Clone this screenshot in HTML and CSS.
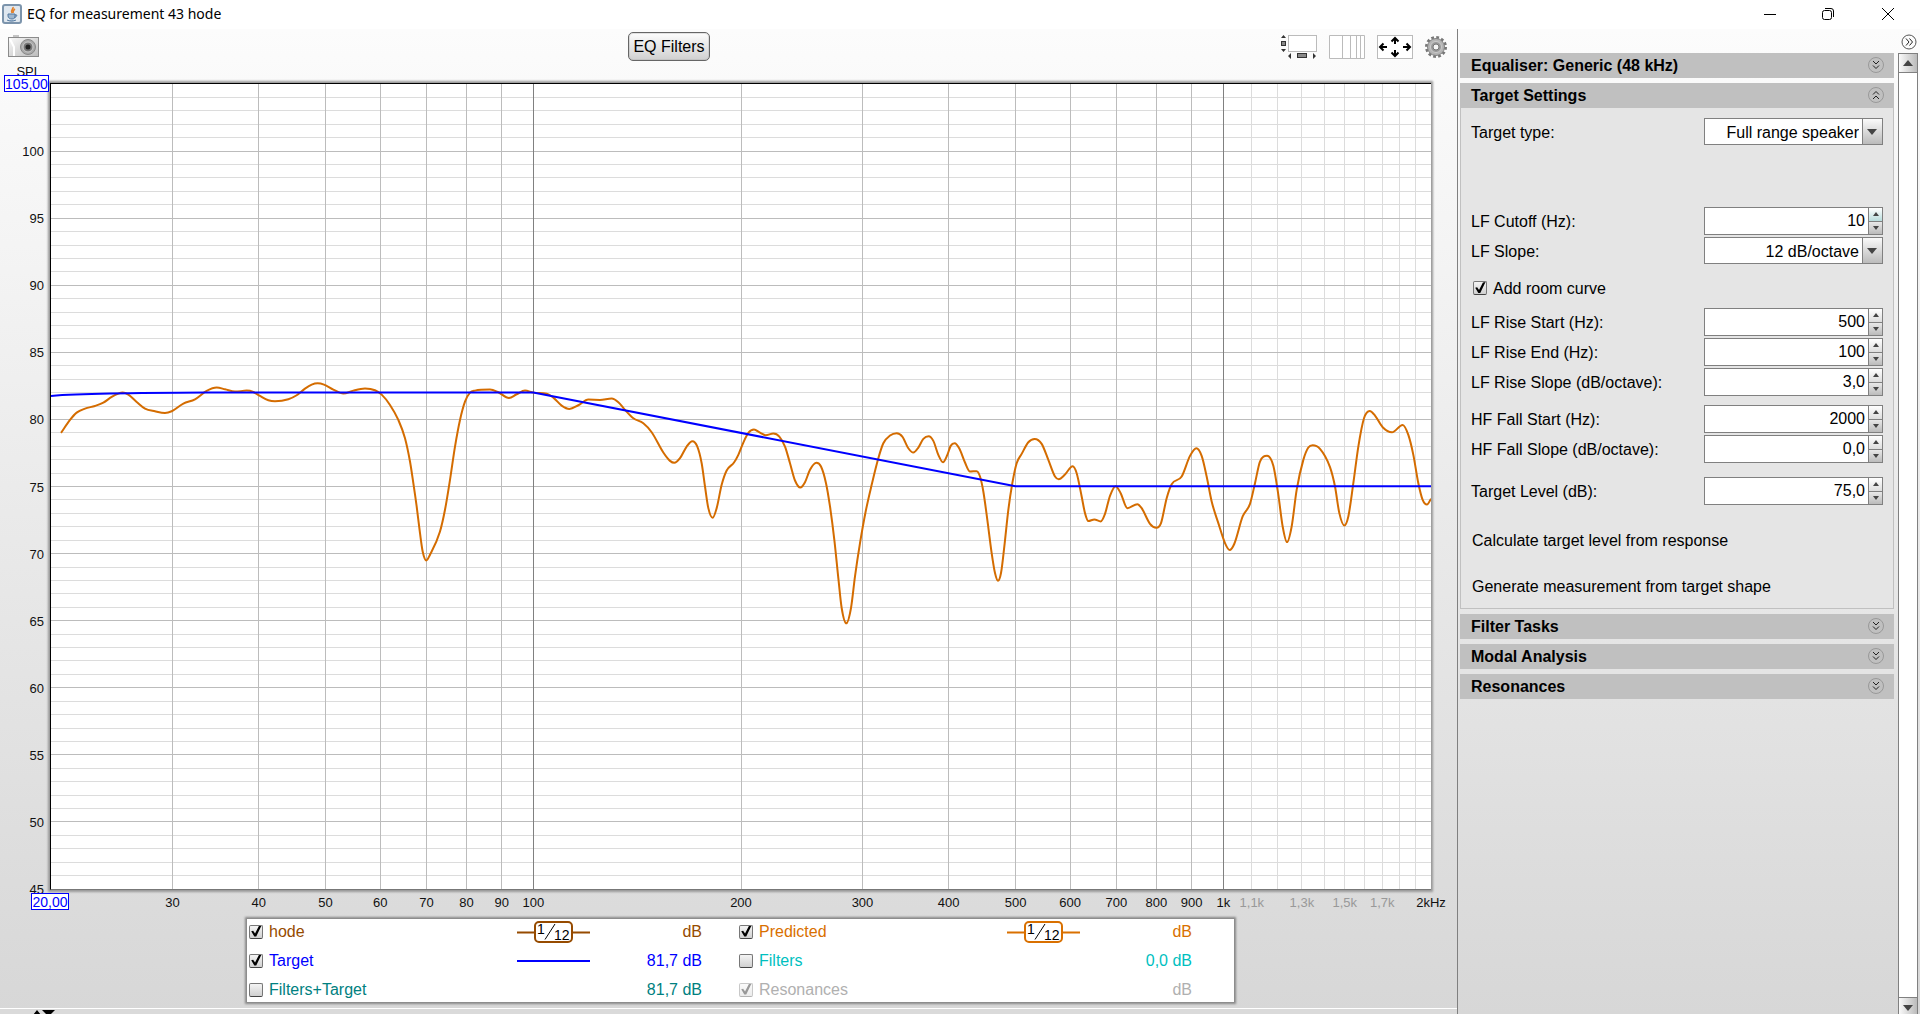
FILE: index.html
```html
<!DOCTYPE html>
<html lang="en">
<head>
<meta charset="utf-8">
<title>EQ for measurement 43 hode</title>
<link rel="stylesheet" href="styles.css">
</head>
<body>
<header class="titlebar">
  <svg class="app-icon" width="20" height="20" viewBox="0 0 20 20">
    <rect x="1" y="1" width="18" height="18" rx="2" fill="#dfe7ef" stroke="#7c94ac" stroke-width="2"/>
    <path d="M11 3c1 2-3 3-1 6M13 5c-2 1-2 2-2 4" fill="none" stroke="#e2812b" stroke-width="1.6"/>
    <path d="M6 10h7v2c0 2-1 3-3 3s-4-1-4-3zM13 11c3-1 2 2-1 3M5 16c3 1.500 6 1.500 9 0" fill="#9db6cf" stroke="#54799f"/>
  </svg>
  <h1 class="title">EQ for measurement 43 hode</h1>
  <div class="window-controls">
    <button type="button" aria-label="Minimize"><svg width="14" height="14" viewBox="0 0 14 14"><path d="M1 7.500h12"/></svg></button>
    <button type="button" aria-label="Restore"><svg width="14" height="14" viewBox="0 0 14 14"><rect x="1.500" y="3.500" width="9" height="9" rx="2"/><path d="M4 1.500h6q2.500 0 2.500 2.500v6"/></svg></button>
    <button type="button" aria-label="Close"><svg width="14" height="14" viewBox="0 0 14 14"><path d="M1 1l12 12M13 1L1 13"/></svg></button>
  </div>
</header>

<div class="workspace">
  <main class="graph">
    <div class="toolbar">
      <button type="button" class="icon-button" aria-label="Capture graph image">
        <svg width="31" height="22" viewBox="0 0 31 22">
          <defs><linearGradient id="cam" x1="0" y1="0" x2="1" y2="1"><stop offset="0" stop-color="#fafafa"/><stop offset="1" stop-color="#bbb"/></linearGradient></defs>
          <rect x="5" y="0" width="6" height="3" fill="#c4c4c4"/>
          <rect x=".5" y="2.500" width="30" height="19" fill="url(#cam)" stroke="#8b8b8b"/>
          <path d="M2 4l4 8v9" fill="none" stroke="#fff" stroke-width="2"/>
          <circle cx="20" cy="12" r="7.500" fill="#aaa" stroke="#888"/>
          <circle cx="20" cy="12" r="5" fill="#777" stroke="#ccc"/>
          <circle cx="20" cy="12" r="2.500" fill="#222"/>
        </svg>
      </button>
      <button type="button" class="eq-button">EQ Filters</button>
      <div class="tools">
        <button type="button" class="icon-button" aria-label="Scrollbars">
          <svg width="36" height="24" viewBox="0 0 36 24">
            <rect x="7.500" y=".5" width="28" height="16" fill="#fff" stroke="#bbb"/>
            <path d="M0 3l2.500-3L5 3zM0 14h5l-2.500 3zM10 18v6l-3-3zM32 18v6l3-3z" fill="#333"/>
            <rect x=".5" y="6.500" width="4" height="4" fill="#888" stroke="#333"/>
            <rect x="16.500" y="18.500" width="9" height="4" fill="#888" stroke="#333"/>
          </svg>
        </button>
        <button type="button" class="icon-button" aria-label="Frequency axis">
          <svg width="36" height="24" viewBox="0 0 36 24"><path d="M.5.5h35v23H.5zM13.500 0v24M21.500 0v24M27.500 0v24M31.500 0v24" fill="#fff" stroke="#bbb"/></svg>
        </button>
        <button type="button" class="icon-button" aria-label="Graph limits">
          <svg width="36" height="24" viewBox="0 0 36 24">
            <rect x=".5" y=".5" width="35" height="23" fill="#fff" stroke="#bbb"/>
            <path d="M18 9V3M14.500 6.500L18 3l3.500 3.500M18 15v6M14.500 17.500L18 21l3.500-3.500M10 12H3M6.500 8.500L3 12l3.500 3.500M26 12h7M29.500 8.500L33 12l-3.500 3.500" fill="none" stroke="#000" stroke-width="2"/>
          </svg>
        </button>
        <button type="button" class="icon-button" aria-label="Graph settings">
          <svg width="22" height="24" viewBox="0 0 22 24">
            <circle cx="11" cy="12" r="9.500" fill="none" stroke="#777" stroke-width="3" stroke-dasharray="2.730 2.240"/>
            <circle cx="11" cy="12" r="8.500" fill="#b5b5b5" stroke="#828282"/>
            <circle cx="11" cy="12" r="5.500" fill="#999" stroke="#ccc"/>
            <circle cx="11" cy="12" r="3" fill="#f5f5f5" stroke="#777"/>
          </svg>
        </button>
      </div>
    </div>

    <div class="plot">
      <svg class="plot-svg" id="plot" width="100%" height="100%" role="img" aria-label="SPL against frequency">
        <g id="grid"></g>
        <svg class="traces" width="100%" height="100%" viewBox="0 0 4140 2418" preserveAspectRatio="none">
          <path id="predicted" class="trace predicted" d=""/>
          <path class="trace target" d="M0 937Q120 928 467 927H1447L2893 1208H4140"/>
        </svg>
        <g id="labels"></g>
      </svg>
      <input class="limit limit-top" aria-label="Maximum SPL" value="105,00">
      <input class="limit limit-left" aria-label="Minimum frequency" value="20,00">
    </div>

    <section class="legend" aria-label="Traces">
      <div class="trace-row hode">
        <input type="checkbox" id="t-hode" checked><label for="t-hode">hode</label>
        <svg width="73" height="24" viewBox="0 0 73 24"><path class="key" d="M0 12.500h73"/><rect class="key" x="18" y="2" width="37" height="20" rx="4"/><path class="slash" d="M28 19.500L38 4"/><text x="20" y="14">1</text><text x="37" y="20">12</text></svg>
        <output>dB</output>
      </div>
      <div class="trace-row pred">
        <input type="checkbox" id="t-pred" checked><label for="t-pred">Predicted</label>
        <svg width="73" height="24" viewBox="0 0 73 24"><path class="key" d="M0 12.500h73"/><rect class="key" x="18" y="2" width="37" height="20" rx="4"/><path class="slash" d="M28 19.500L38 4"/><text x="20" y="14">1</text><text x="37" y="20">12</text></svg>
        <output>dB</output>
      </div>
      <div class="trace-row targ">
        <input type="checkbox" id="t-targ" checked><label for="t-targ">Target</label>
        <svg width="73" height="24" viewBox="0 0 73 24"><path class="key" d="M0 12h73"/></svg>
        <output>81,7 dB</output>
      </div>
      <div class="trace-row filt">
        <input type="checkbox" id="t-filt"><label for="t-filt">Filters</label>
        <span></span>
        <output>0,0 dB</output>
      </div>
      <div class="trace-row both">
        <input type="checkbox" id="t-both"><label for="t-both">Filters+Target</label>
        <span></span>
        <output>81,7 dB</output>
      </div>
      <div class="trace-row reso">
        <input type="checkbox" id="t-reso" checked disabled><label for="t-reso">Resonances</label>
        <span></span>
        <output>dB</output>
      </div>
    </section>

    <div class="splitter">
      <svg width="22" height="5" viewBox="0 0 22 5"><path d="M0 5l4-5 4 5zM9 0h13l-5 5h-3z" fill="#000"/></svg>
    </div>
  </main>

  <aside class="side">
    <div class="side-top">
      <button type="button" class="round" aria-label="Hide panel"><svg width="16" height="16" viewBox="0 0 16 16"><circle cx="8" cy="8" r="7"/><path d="M5 4.500L8 8l-3 3.500M8.500 4.500l3 3.500-3 3.500"/></svg></button>
    </div>
    <div class="side-body">
      <div class="sections">
        <button type="button" class="section-head">Equaliser: Generic (48 kHz)<svg width="16" height="16" viewBox="0 0 16 16"><circle cx="8" cy="8" r="7.500"/><path d="M5 4l3 3 3-3M5 8.500l3 3 3-3"/></svg></button>
        <section class="section">
          <button type="button" class="section-head">Target Settings<svg width="16" height="16" viewBox="0 0 16 16"><circle cx="8" cy="8" r="7.500"/><path d="M5 7.500l3-3 3 3M5 12l3-3 3 3"/></svg></button>
          <form class="settings">
            <div class="row type-row"><label for="type">Target type:</label><div class="combo"><select id="type"><option>Full range speaker</option></select></div></div>
            <div class="row"><label for="cutoff">LF Cutoff (Hz):</label><div class="spinner"><input id="cutoff" value="10"><div class="steps"><button type="button" class="up hot" aria-label="Increase"></button><button type="button" class="down" aria-label="Decrease"></button></div></div></div>
            <div class="row"><label for="slope">LF Slope:</label><div class="combo"><select id="slope"><option>12 dB/octave</option></select></div></div>
            <div class="check-row"><input type="checkbox" id="room" checked><label for="room">Add room curve</label></div>
            <div class="row"><label for="rise-start">LF Rise Start (Hz):</label><div class="spinner"><input id="rise-start" value="500"><div class="steps"><button type="button" class="up" aria-label="Increase"></button><button type="button" class="down" aria-label="Decrease"></button></div></div></div>
            <div class="row"><label for="rise-end">LF Rise End (Hz):</label><div class="spinner"><input id="rise-end" value="100"><div class="steps"><button type="button" class="up" aria-label="Increase"></button><button type="button" class="down" aria-label="Decrease"></button></div></div></div>
            <div class="row"><label for="rise-slope">LF Rise Slope (dB/octave):</label><div class="spinner"><input id="rise-slope" value="3,0"><div class="steps"><button type="button" class="up" aria-label="Increase"></button><button type="button" class="down" aria-label="Decrease"></button></div></div></div>
            <div class="row fall-row"><label for="fall-start">HF Fall Start (Hz):</label><div class="spinner"><input id="fall-start" value="2000"><div class="steps"><button type="button" class="up" aria-label="Increase"></button><button type="button" class="down" aria-label="Decrease"></button></div></div></div>
            <div class="row"><label for="fall-slope">HF Fall Slope (dB/octave):</label><div class="spinner"><input id="fall-slope" value="0,0"><div class="steps"><button type="button" class="up" aria-label="Increase"></button><button type="button" class="down" aria-label="Decrease"></button></div></div></div>
            <div class="row level-row"><label for="level">Target Level (dB):</label><div class="spinner"><input id="level" value="75,0"><div class="steps"><button type="button" class="up" aria-label="Increase"></button><button type="button" class="down" aria-label="Decrease"></button></div></div></div>
            <button type="button" class="action">Calculate target level from response</button>
            <button type="button" class="action">Generate measurement from target shape</button>
          </form>
        </section>
        <button type="button" class="section-head">Filter Tasks<svg width="16" height="16" viewBox="0 0 16 16"><circle cx="8" cy="8" r="7.500"/><path d="M5 4l3 3 3-3M5 8.500l3 3 3-3"/></svg></button>
        <button type="button" class="section-head">Modal Analysis<svg width="16" height="16" viewBox="0 0 16 16"><circle cx="8" cy="8" r="7.500"/><path d="M5 4l3 3 3-3M5 8.500l3 3 3-3"/></svg></button>
        <button type="button" class="section-head">Resonances<svg width="16" height="16" viewBox="0 0 16 16"><circle cx="8" cy="8" r="7.500"/><path d="M5 4l3 3 3-3M5 8.500l3 3 3-3"/></svg></button>
      </div>
      <div class="scrollbar">
        <button type="button" class="up" aria-label="Scroll up"></button>
        <button type="button" class="down" aria-label="Scroll down"></button>
      </div>
    </div>
  </aside>
</div>
<script src="plot.js"></script>
</body>
</html>
```
FILE: styles.css
```css
* {
  box-sizing: border-box;
}

body {
  margin: 0;
  height: 100vh;
  display: flex;
  flex-direction: column;
  overflow: hidden;
  font-family: "Liberation Sans", Arial, sans-serif;
  font-size: 16px;
  line-height: 20px;
  color: #000;
  background: #fff;
}

button,
input,
select {
  font: inherit;
  color: inherit;
  margin: 0;
  padding: 0;
  border: 0;
  background: none;
}

svg {
  display: block;
}

/* Title bar */
.titlebar {
  flex: none;
  display: flex;
  align-items: center;
  height: 29px;
  padding: 0 2px 2px 2px;
  background: #fff;
}

.title {
  margin: 0 0 0 5px;
  flex: 1;
  font: 400 14px/20px "Noto Sans", sans-serif;
}

.window-controls {
  display: flex;
}

.window-controls button {
  display: flex;
  align-items: center;
  justify-content: center;
  width: 58px;
  height: 27px;
}

.window-controls button:last-child {
  width: 61px;
}

.window-controls svg {
  fill: none;
  stroke: #000;
}

/* Window body */
.workspace {
  flex: 1;
  min-height: 0;
  display: flex;
  background: linear-gradient(#fcfcfc, #e6e6e6 60%, #d7d7d7);
}

.graph {
  flex: 1;
  min-width: 0;
  display: flex;
  flex-direction: column;
}

.toolbar {
  display: grid;
  grid-template-columns: 620fr auto 737fr;
  height: 54px;
  padding: 3px 10px 0 8px;
  align-items: start;
}

.icon-button {
  display: block;
  justify-self: start;
  margin-top: 3px;
}

.eq-button {
  width: 82px;
  height: 29px;
  border: 1px solid #666;
  border-radius: 5px;
  background: linear-gradient(#fdfdfd, #d0d0d0);
  box-shadow: inset 0 0 0 1px #aaa5;
}

.tools {
  display: flex;
  gap: 12px;
  justify-content: flex-end;
}

/* Plot */
.plot {
  position: relative;
  flex: 1;
  min-height: 0;
  margin: 0 26px 29px 50px;
  border-left: 1px solid #000;
  border-top: 1px solid #000;
  border-bottom: 1px solid #777;
  background: #fff;
  box-shadow: 0 0 2px 2px #999;
}

.plot-svg {
  overflow: visible;
}

.grid-line {
  stroke-width: 1;
  stroke: #dcdcdc;
  shape-rendering: crispEdges;
}

.grid-line.major {
  stroke: #bcbcbc;
}

.grid-line.decade {
  stroke: #808080;
}

.axis-label {
  font-size: 13px;
  fill: #111;
}

.axis-label.minor {
  fill: #999;
}

.trace {
  fill: none;
  stroke-width: 2;
  vector-effect: non-scaling-stroke;
}

.predicted {
  stroke: #d46c00;
}

.target {
  stroke: #00f;
}

.limit {
  position: absolute;
  height: 17px;
  border: 1px solid #00f;
  background: #fff;
  color: #00f;
  font-size: 14px;
  line-height: 15px;
  text-align: center;
}

.limit-top {
  width: 45px;
  right: 100%;
  top: -9px;
  margin-right: 2px;
}

.limit-left {
  width: 38px;
  left: -20px;
  top: 100%;
  margin-top: 4px;
}

/* Legend */
.legend {
  align-self: center;
  display: grid;
  grid-template-columns: 490px 490px;
  grid-auto-rows: 29px;
  margin-left: 24px;
  padding-right: 7px;
  height: 83px;
  align-content: center;
  background: #fff;
  box-shadow: 0 0 2px 2px #888;
}

.trace-row {
  display: grid;
  grid-template-columns: 14px 1fr 73px 112px;
  align-items: center;
  padding: 0 35px 0 2px;
}

.trace-row label {
  padding-left: 6px;
}

.trace-row label,
.trace-row output {
  padding-top: 1px;
}

.trace-row output {
  text-align: right;
}

.trace-row .key {
  fill: none;
  stroke: currentColor;
  stroke-width: 2;
}

.trace-row rect.key {
  fill: #fff;
}

.slash {
  stroke: #000;
}

.trace-row text {
  font-size: 14px;
}

.hode { color: #964b00; }
.pred { color: #d97000; }
.targ { color: #00f; }
.filt { color: #00bfbf; }
.both { color: #008080; }
.reso { color: #b0b0b0; }

input[type="checkbox"] {
  appearance: none;
  width: 14px;
  height: 14px;
  border: 1px solid #777;
  border-bottom-color: #444;
  border-radius: 2px;
  background: linear-gradient(#f4f4f4, #d0d0d0);
}

input[type="checkbox"]:checked::before {
  content: "";
  display: block;
  width: 12px;
  height: 12px;
  background: #000;
  clip-path: polygon(10% 48%, 26% 44%, 42% 66%, 74% 4%, 96% 0, 52% 92%, 36% 92%);
}

input[type="checkbox"]:disabled {
  opacity: .4;
}

.splitter {
  height: 6px;
  margin-top: 6px;
  padding: 1px 0 0 33px;
  border-top: 1px solid #fff;
  background: #dadada;
  overflow: hidden;
}

/* Side panel */
.side {
  flex: none;
  width: 463px;
  display: flex;
  flex-direction: column;
  border-left: 1px solid #808080;
}

.side-top {
  display: flex;
  justify-content: flex-end;
  height: 24px;
  padding: 5px 3px 0 0;
}

.round {
  height: 16px;
}

.round svg,
.section-head svg {
  fill: none;
  stroke: #222;
}

.round circle {
  stroke: #555;
}

.side-body {
  flex: 1;
  min-height: 0;
  display: flex;
  gap: 4px;
  padding: 0 2px;
}

.sections {
  flex: 1;
  display: flex;
  flex-direction: column;
  gap: 5px;
}

.section-head {
  display: flex;
  justify-content: space-between;
  align-items: center;
  flex: none;
  width: 100%;
  height: 25px;
  padding: 1px 10px 0 11px;
  background: #c0c0c0;
  font-weight: 700;
  text-align: left;
}

.section-head svg {
  margin-bottom: 2px;
}

.section-head circle {
  stroke: #999;
}

.settings {
  display: flex;
  flex-direction: column;
  gap: 2px;
  padding: 10px;
  border: 1px solid #c0c0c0;
  border-top: 0;
  background: #e5e5e5;
}

.row {
  display: flex;
  justify-content: space-between;
  align-items: center;
}

.row label,
.check-row label {
  padding-top: 2px;
}

.type-row {
  margin-bottom: 60px;
}

.check-row {
  display: flex;
  align-items: center;
  gap: 6px;
  height: 28px;
  margin: 8px 0 4px;
  padding-left: 2px;
}

.fall-row {
  margin-top: 7px;
}

.level-row {
  margin-top: 12px;
}

.combo,
.spinner {
  position: relative;
  display: flex;
  width: 179px;
  height: 28px;
  border: 1px solid #808080;
  background: #fff;
}

.combo {
  height: 27px;
}

.combo select {
  appearance: none;
  width: 100%;
  padding: 2px 23px 0 0;
  text-align: right;
  text-align-last: right;
  background: linear-gradient(#808080, #808080) right 19px top / 1px 100% no-repeat,
    linear-gradient(#fafafa, #bbb) right / 20px 100% no-repeat;
}

.combo::after {
  content: "";
  position: absolute;
  right: 5px;
  top: 10px;
  border: 5px solid transparent;
  border-top: 6px solid #444;
  border-bottom: 0;
}

.spinner input {
  flex: 1;
  min-width: 0;
  padding: 0 3px 0 0;
  text-align: right;
}

.steps {
  display: flex;
  flex-direction: column;
  width: 14px;
  border-left: 1px solid #808080;
}

.up,
.down {
  display: flex;
  align-items: center;
  justify-content: center;
  flex: 1;
  background: linear-gradient(#fff, #ddd);
}

.steps .down {
  border-top: 1px solid #808080;
  background: linear-gradient(#e8e8e8, #bbb);
}

.steps .hot {
  background: linear-gradient(#fff, #b8dcdc);
}

.up::before,
.down::before {
  content: "";
  border: 3px solid transparent;
}

.up::before {
  border-bottom: 4px solid #444;
  border-top: 0;
}

.down::before {
  border-top: 4px solid #444;
  border-bottom: 0;
}

.action {
  align-self: flex-start;
  height: 20px;
  margin: 24px 0 0 1px;
}

.action:last-child {
  margin-bottom: 1px;
}

.scrollbar {
  display: flex;
  flex-direction: column;
  justify-content: space-between;
  width: 20px;
  border: 1px solid #808080;
  border-bottom: 0;
  background: #fff;
}

.scrollbar button {
  flex: none;
  height: 19px;
  border-bottom: 1px solid #808080;
  background: linear-gradient(90deg, #fafafa, #bbb);
}

.scrollbar .down {
  height: 17px;
  padding-top: 3px;
  border-top: 1px solid #808080;
  border-bottom: 0;
}

.scrollbar .up::before,
.scrollbar .down::before {
  border-left-width: 5px;
  border-right-width: 5px;
}

.scrollbar .up::before {
  border-bottom-width: 6px;
}

.scrollbar .down::before {
  border-top-width: 6px;
}
```
FILE: plot.js
```js
const NS = "http://www.w3.org/2000/svg";
const F_MIN = 20, F_MAX = 2000, DB_MIN = 45, DB_MAX = 105;
const grid = document.getElementById("grid");
const labels = document.getElementById("labels");

const xPct = f => 100 * Math.log(f / F_MIN) / Math.log(F_MAX / F_MIN) + "%";
const yPct = db => 100 * (DB_MAX - db) / (DB_MAX - DB_MIN) + "%";

function add(parent, tag, attrs, text) {
  const el = document.createElementNS(NS, tag);
  for (const key in attrs) el.setAttribute(key, attrs[key]);
  if (text) el.textContent = text;
  parent.append(el);
}

function vLine(f, kind) {
  add(grid, "line", { class: "grid-line " + kind, x1: xPct(f), x2: xPct(f), y1: 0, y2: "100%" });
}

function hLine(db, kind) {
  add(grid, "line", { class: "grid-line " + kind, x1: 0, x2: "100%", y1: yPct(db), y2: yPct(db) });
}

for (let f = 1100; f < 2000; f += 100) vLine(f, "minor");
for (let db = DB_MIN + 1; db < DB_MAX; db++) if (db % 5) hLine(db, "minor");
for (let db = DB_MIN + 5; db < DB_MAX; db += 5) hLine(db, "major");
[30, 40, 50, 60, 70, 80, 90, 200, 300, 400, 500, 600, 700, 800, 900].forEach(f => vLine(f, "major"));
[100, 1000].forEach(f => vLine(f, "decade"));

for (let db = DB_MIN; db < DB_MAX; db += 5)
  add(labels, "text", { class: "axis-label", x: -7, y: yPct(db), dy: 5, "text-anchor": "end" }, String(db));
add(labels, "text", { class: "axis-label", x: -10, y: 0, dy: -8, "text-anchor": "end" }, "SPL");

const freqLabel = (f, text, kind = "") =>
  add(labels, "text", { class: "axis-label " + kind, x: xPct(f), y: "100%", dy: 18, "text-anchor": "middle" }, text);
[30, 40, 50, 60, 70, 80, 90, 100, 200, 300, 400, 500, 600, 700, 800, 900].forEach(f => freqLabel(f, String(f)));
freqLabel(1000, "1k");
freqLabel(2000, "2kHz");
[[1100, "1,1k"], [1300, "1,3k"], [1500, "1,5k"], [1700, "1,7k"]].forEach(([f, t]) => freqLabel(f, t, "minor"));

// Response samples by band; each band is relative to its own origin.
const bands = [
  { x: -33, y: 829, points: [[63,219],[90,180],[110,158],[135,146],[165,138],[190,128],[215,111],[235,101],[248,98],[265,104],[290,126],[315,146],[345,154],[375,159],[395,154],[430,131],[465,118],[500,93],[530,83],[555,88],[585,95],[620,92],[640,96],[660,108],[685,121],[705,124],[745,118],[770,106],[795,86],[815,74],[833,70],[852,74],[880,89],[910,101],[940,92],[975,86],[1005,91],[1025,104],[1050,135],[1075,180],[1095,235],[1110,305],[1120,370],[1130,440],[1140,520],[1148,575],[1159,602],[1170,585],[1200,515],[1215,450],[1230,360],[1245,260],[1260,180],[1275,125],[1290,98],[1305,92],[1350,89],[1375,97],[1407,114],[1430,103],[1455,92]] },
  { x: 1347, y: 829, points: [[100,98],[140,101],[160,113],[185,137],[208,147],[235,136],[265,119],[300,120],[335,116],[355,127],[375,150],[400,175],[430,190],[455,217],[490,278],[510,303],[523,309],[540,295],[560,260],[577,244],[592,260],[605,310],[615,380],[625,445],[638,474],[650,445],[665,375],[680,332],[702,308],[715,285],[730,248],[745,219],[762,209],[780,218],[797,226],[820,221],[838,230],[855,260],[870,310],[885,362],[901,383],[915,367],[930,330],[949,309],[963,320],[978,370],[990,440],[1003,540],[1015,655],[1025,745],[1039,791],[1053,745],[1065,650],[1080,550],[1097,455],[1115,375],[1135,295],[1150,250],[1170,227],[1190,220],[1207,230],[1225,265],[1240,278],[1255,263],[1270,237],[1286,229],[1300,243],[1315,285],[1329,307],[1342,285],[1352,258],[1364,250],[1378,266],[1395,308],[1410,335],[1430,334],[1440,350],[1450,395],[1462,480],[1475,580],[1485,640],[1494,663],[1503,640],[1513,560],[1525,450],[1537,370]] },
  { x: 2847, y: 889, points: [[50,250],[65,222],[85,187],[104,177],[125,192],[145,240],[165,290],[176,298],[195,284],[218,259],[230,280],[245,350],[255,400],[265,424],[283,419],[302,425],[315,402],[330,348],[347,319],[362,340],[382,385],[412,373],[425,385],[450,432],[469,444],[483,430],[500,355],[515,313],[545,290],[570,228],[589,205],[605,228],[620,290],[635,365],[655,430],[675,490],[689,511],[703,492],[728,410],[750,372],[765,310],[780,245],[801,228],[820,258],[835,345],[848,440],[861,487],[875,440],[890,330],[910,240],[925,203],[938,196],[960,207],[990,262],[1005,320],[1018,400],[1033,437],[1045,410],[1060,310],[1075,200],[1092,115],[1109,93],[1125,107],[1148,142],[1176,157],[1208,135],[1225,165],[1240,225],[1255,310],[1268,360],[1281,374],[1293,357]] }
];

// Monotone cubic interpolation keeps peaks and dips at the sampled points.
function smoothPath(p) {
  const n = p.length;
  const slope = i => (p[i + 1][1] - p[i][1]) / (p[i + 1][0] - p[i][0]);
  const tangent = p.map((_, i) => {
    if (i === 0) return slope(0);
    if (i === n - 1) return slope(n - 2);
    const a = slope(i - 1), b = slope(i);
    return a * b <= 0 ? 0 : Math.sign(a) * Math.min(Math.abs(a + b) / 2, 3 * Math.abs(a), 3 * Math.abs(b));
  });
  let d = "M" + p[0];
  for (let i = 0; i < n - 1; i++) {
    const h = (p[i + 1][0] - p[i][0]) / 3;
    d += "C" + [p[i][0] + h, p[i][1] + h * tangent[i], p[i + 1][0] - h, p[i + 1][1] - h * tangent[i + 1], ...p[i + 1]];
  }
  return d;
}

document.getElementById("predicted").setAttribute("d",
  smoothPath(bands.flatMap(b => b.points.map(([x, y]) => [x + b.x, y + b.y]))));
```
